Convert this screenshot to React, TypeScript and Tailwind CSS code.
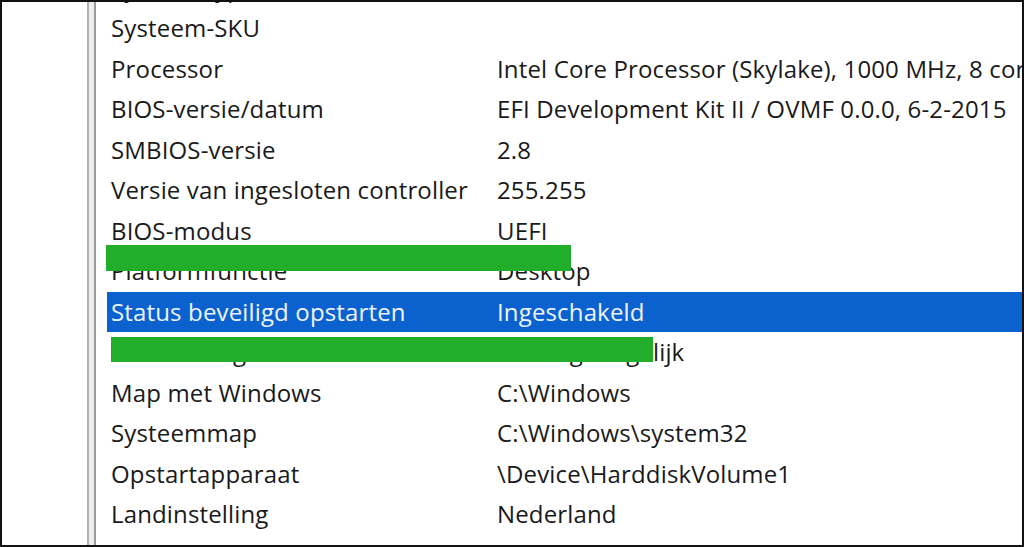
import React from "react";

const rows: [string, string][] = [
  ["Systeemtype", "x64-based PC"],
  ["Systeem-SKU", ""],
  ["Processor", "Intel Core Processor (Skylake), 1000 MHz, 8 core(s), 8 logische processor(s)"],
  ["BIOS-versie/datum", "EFI Development Kit II / OVMF 0.0.0, 6-2-2015"],
  ["SMBIOS-versie", "2.8"],
  ["Versie van ingesloten controller", "255.255"],
  ["BIOS-modus", "UEFI"],
  ["Platformfunctie", "Desktop"],
  ["Status beveiligd opstarten", "Ingeschakeld"],
  ["PCR7-configuratie", "Binding mogelijk"],
  ["Map met Windows", "C:\\Windows"],
  ["Systeemmap", "C:\\Windows\\system32"],
  ["Opstartapparaat", "\\Device\\HarddiskVolume1"],
  ["Landinstelling", "Nederland"],
];

export default function App() {
  return (
    <div
      className="relative w-[1024px] h-[547px] overflow-hidden bg-white border-2 border-[#111]"
      style={{ fontFamily: '"Open Sans", "Noto Sans", sans-serif' }}
    >
      <div className="flex h-full">
        <div className="w-[85px] shrink-0 bg-white" />
        <div className="w-[2px] shrink-0 bg-[#b0b0b0]" />
        <div className="w-[5px] shrink-0 bg-[#ededed]" />
        <div className="w-[2px] shrink-0 bg-[#9a9a9a]" />
        <div className="flex-1 min-w-0 pl-[11px] pt-[6px]">
          <div className="-mt-[40.5px] flex flex-col">
            {rows.map(([k, v], i) => {
              const sel = i === 8;
              return (
                <div
                  key={k}
                  className={
                    "flex h-[40.5px] items-center whitespace-nowrap text-[24px] tracking-[0.15px] pl-[4px] " +
                    (sel ? "bg-[#0b62ce] text-[#eef4ff]" : "text-[#1a1a1a]")
                  }
                >
                  <span className="w-[386px] shrink-0">{k}</span>
                  <span>{v}</span>
                </div>
              );
            })}
          </div>
        </div>
      </div>
      <div className="absolute left-[104px] top-[243px] w-[465px] h-[26px] bg-[#20ae2b]" />
      <div className="absolute left-[109px] top-[335px] w-[542px] h-[25px] bg-[#20ae2b]" />
    </div>
  );
}
